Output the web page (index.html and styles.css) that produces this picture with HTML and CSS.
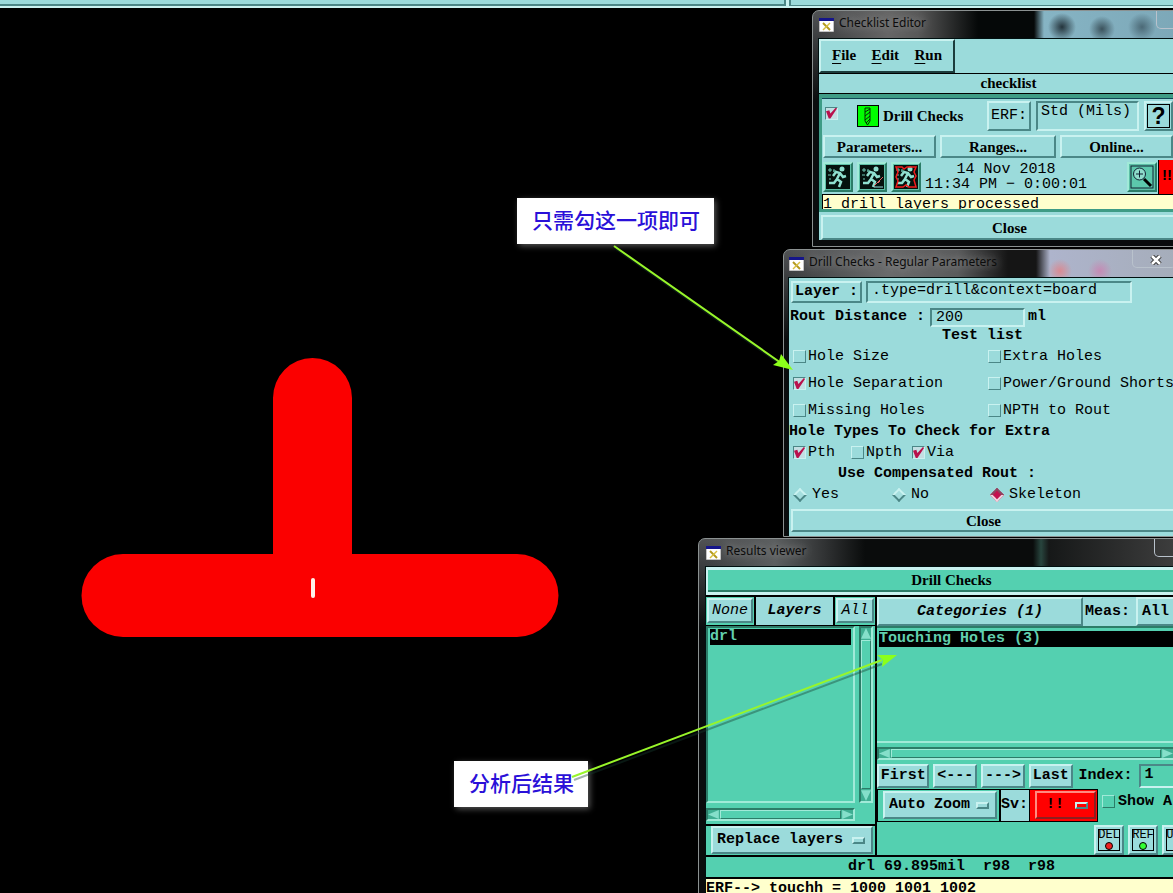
FILE: index.html
```html
<!DOCTYPE html>
<html lang="en">
<head>
<meta charset="utf-8">
<title>Drill Checks</title>
<link rel="stylesheet" href="styles.css">
</head>
<body>
<svg class="defs" aria-hidden="true">
  <symbol id="xicon" viewBox="0 0 15 14">
    <rect width="15" height="14" fill="#fff"/><rect width="15" height="3" fill="#15158a"/>
    <path d="M0 3v11h15V3" fill="none" stroke="#888"/>
    <path d="M4 5l7 7" stroke="#b49a20" stroke-width="2"/><path d="M11 5l-7 7" stroke="#d8c040" stroke-width="1.500"/>
  </symbol>
  <symbol id="runner" viewBox="0 0 24 24">
    <rect width="24" height="24" fill="#04120e"/>
    <circle cx="16" cy="4" r="2.500" fill="#8fe0d0"/>
    <path d="M14 8l-3 6 4 3-2 5M11 14l-3 4H3M7 11l3-4 4 1 3 4 3-1" fill="none" stroke="#8fe0d0" stroke-width="2.500"/>
    <path d="M4 3v4M2 5h4M8 4v3M7 6h3M2 10h3M3 14h2" stroke="#6fc8b4"/>
  </symbol>
</svg>

<div class="topbar"><div class="topbar-part"></div><div class="topbar-part topbar-end"></div></div>

<main class="desktop">
  <svg class="board" width="600" height="893" aria-label="Drill layer">
    <path d="M273 554V398a39.500 40 0 0 1 79 0V554H517a41 41 0 0 1 0 83H123a41 41 0 0 1 0-83z" fill="#fb0000"/>
    <rect x="311" y="578" width="4" height="20" rx="2" fill="#fff0e8"/>
  </svg>

  <section class="window win-checklist">
    <header class="titlebar"><svg class="xicon"><use href="#xicon"/></svg><h2>Checklist Editor</h2><span class="caption-group"></span></header>
    <div class="client">
      <nav class="menurow"><div class="menubar">
        <button type="button"><u>F</u>ile</button><button type="button"><u>E</u>dit</button><button type="button"><u>R</u>un</button>
      </div></nav>
      <div class="listname">checklist</div>
      <div class="checkpanel">
        <div class="checkhead">
          <input type="checkbox" class="tick" aria-label="Drill Checks enabled" checked>
          <svg class="drill" viewBox="0 0 22 22"><rect width="22" height="22" fill="#000"/><rect x="1" y="1" width="20" height="20" fill="#0f0"/><path d="M8 3h5v13l-2.500 4L8 16zM8 7l5-3M8 11l5-4M8 15l5-4M9 18l4-4" fill="none" stroke="#062806"/></svg>
          <strong>Drill Checks</strong>
          <button type="button" class="btn mono erf">ERF:</button>
          <input type="text" class="field erf-field" aria-label="ERF" value="Std (Mils)">
          <button type="button" class="btn help" aria-label="Help"><span>?</span></button>
        </div>
        <div class="checkbuttons">
          <button type="button" class="btn">Parameters...</button><button type="button" class="btn">Ranges...</button><button type="button" class="btn">Online...</button>
        </div>
        <div class="runrow">
          <button type="button" class="btn green icon" aria-label="Run"><svg><use href="#runner"/></svg></button>
          <button type="button" class="btn green icon" aria-label="Run on selection"><svg viewBox="0 0 24 24"><use href="#runner"/><path d="M14 21l9-9M18 18l2-2" stroke="#d66" fill="none"/><path d="M14 22h9" stroke="#9dd"/></svg></button>
          <button type="button" class="btn green icon" aria-label="Run in area"><svg viewBox="0 0 24 24"><use href="#runner"/><path d="M2 2h6l2 2 3-2h9l-2 5 2 4-2 4 2 7h-7l-3-2-3 2H2l2-6-2-4 2-5z" stroke="#f21c1c" stroke-width="1.500" fill="none"/></svg></button>
          <p class="runtime">14 Nov 2018<br>11:34 PM − 0:00:01</p>
          <button type="button" class="btn green icon" aria-label="Show results"><svg viewBox="0 0 24 24"><rect x="1" y="1" width="22" height="22" fill="#5cc8ac" stroke="#123"/><circle cx="9.500" cy="9" r="6" fill="#8edccb" stroke="#123"/><path d="M6 9h7M9.500 5.500v7" stroke="#123"/><path d="M14 14l7 7" stroke="#000" stroke-width="3"/></svg></button>
          <div class="severity">!!</div>
        </div>
        <div class="message">1 drill layers processed</div>
      </div>
      <button type="button" class="btn wide">Close</button>
    </div>
  </section>

  <section class="window win-params">
    <header class="titlebar"><svg class="xicon"><use href="#xicon"/></svg><h2>Drill Checks - Regular Parameters</h2>
      <button type="button" class="caption-group" aria-label="Close window"><svg viewBox="0 0 12 10"><path d="M2 1l8 8M10 1l-8 8" stroke="#333" stroke-width="4.500"/><path d="M2 1l8 8M10 1l-8 8" stroke="#fff" stroke-width="2.500"/></svg></button></header>
    <form class="client mono">
      <div class="layerrow"><button type="button" class="btn mono bold">Layer :</button><input type="text" class="field" aria-label="Layer" value=".type=drill&amp;context=board"></div>
      <div class="routrow"><label for="rout">Rout Distance :</label><input type="text" class="field" id="rout" value="200"><b>ml</b></div>
      <h3 class="center">Test list</h3>
      <div class="tests">
        <label><input type="checkbox" class="tick">Hole Size</label><label><input type="checkbox" class="tick">Extra Holes</label>
        <label><input type="checkbox" class="tick" checked>Hole Separation</label><label><input type="checkbox" class="tick">Power/Ground Shorts</label>
        <label><input type="checkbox" class="tick">Missing Holes</label><label><input type="checkbox" class="tick">NPTH to Rout</label>
      </div>
      <h3>Hole Types To Check for Extra</h3>
      <div class="types">
        <label><input type="checkbox" class="tick" checked>Pth</label><label><input type="checkbox" class="tick">Npth</label><label><input type="checkbox" class="tick" checked>Via</label>
      </div>
      <h3 class="rout-title">Use Compensated Rout :</h3>
      <div class="radios">
        <label><input type="radio" name="rout">Yes</label><label><input type="radio" name="rout">No</label><label><input type="radio" name="rout" checked>Skeleton</label>
      </div>
      <button type="button" class="btn wide">Close</button>
    </form>
  </section>

  <section class="window win-results">
    <header class="titlebar"><svg class="xicon"><use href="#xicon"/></svg><h2>Results viewer</h2><span class="caption-group"></span></header>
    <div class="client">
      <div class="results-name">Drill Checks</div>
      <div class="results-body">
        <div class="layers">
          <div class="layers-head"><div><button type="button" class="btn mono ital">None</button></div><strong>Layers</strong><div><button type="button" class="btn mono ital">All</button></div></div>
          <div class="layers-list">
            <div class="listbox"><div class="selected">drl</div></div>
            <div class="vscroll"><i class="up"></i><span></span><i class="down"></i></div>
            <div class="hscroll"><i class="left"></i><span></span><i class="right"></i></div>
          </div>
          <div class="replace"><div class="option"><select aria-label="Layer display"><option>Replace layers</option></select></div></div>
        </div>
        <div class="categories">
          <div class="cat-head"><button type="button" class="btn mono bold ital">Categories (1)</button><b>Meas:</b><button type="button" class="btn mono bold">All</button></div>
          <div class="listbox"><div class="selected">Touching Holes (3)</div></div>
          <div class="hscroll"><i class="left"></i><span></span><i class="right"></i></div>
          <div class="navrow"><button type="button" class="btn">First</button><button type="button" class="btn">&lt;---</button><button type="button" class="btn">---&gt;</button><button type="button" class="btn">Last</button><label for="index">Index:</label><input type="text" class="field" id="index" value="1"></div>
          <div class="zoomrow">
            <div class="zoombox"><div class="option"><select aria-label="Zoom mode"><option>Auto Zoom</option></select></div></div>
            <label for="sv">Sv:</label>
            <div class="svbox"><div class="option red"><select id="sv"><option>!!</option></select></div></div>
            <label class="showall"><input type="checkbox" class="tick">Show All</label>
          </div>
          <div class="actions"><button type="button" class="btn act">DEL</button><button type="button" class="btn act go">REF</button><button type="button" class="btn act">UPD</button></div>
        </div>
      </div>
      <div class="status">drl 69.895mil&nbsp; r98&nbsp; r98</div>
      <div class="erfline">ERF--&gt; touchh = 1000 1001 1002</div>
    </div>
  </section>

  <div class="note note-check">只需勾这一项即可</div>
  <div class="note note-result">分析后结果</div>
  <svg class="arrows" width="1173" height="893" aria-hidden="true">
    <g stroke="#163c30" stroke-opacity=".4" stroke-width="2"><path d="M616 249L783 366M574 780L882 664"/></g>
    <g stroke="#98f52a" stroke-width="2"><path d="M614 246L781 363M572 777L882 660"/></g>
    <path d="M793 370L773 365L779 361L781 354zM897 655L882 667L883 660L877 655z" fill="#8cff1a"/>
  </svg>
</main>
</body>
</html>
```
FILE: styles.css
```css
:root { --cyan: #9bdbdb; --green: #54d0b0; --lite: #c9f2f0; --dark: #4b8787; --gdark: #2c7c68; --glite: #a0ead8; }
*, ::before, ::after { box-sizing: border-box; }
body { margin: 0; height: 100vh; overflow: hidden; position: relative; background: #000; color: #000; font: bold 15px/18px "Liberation Serif", serif; }
button, input, select { font: inherit; color: inherit; margin: 0; padding: 0; border: 0; border-radius: 0; background: none; }
h2, h3, p { margin: 0; font: inherit; }
.defs { position: absolute; width: 0; height: 0; }
.mono { font-family: "Liberation Mono", monospace; font-weight: normal; }
.bold { font-weight: bold; }
.ital { font-style: italic; }

.topbar { display: flex; gap: 3px; height: 8px; background: var(--lite); }
.topbar-part { width: 67%; height: 6px; background: var(--cyan); border: solid var(--dark); border-width: 0 2px 2px 0; }
.topbar-end { flex: 1; border-width: 0 0 1px 2px; }
.board, .arrows { position: absolute; left: 0; top: 0; }
.arrows { pointer-events: none; fill: none; }

/* Window frames */
.window { position: absolute; padding: 0 5px 6px; border: 1px solid #8b9191; border-radius: 7px 7px 0 0; background: linear-gradient(#505254, #0a0c0d 90px); }
.win-checklist { left: 812px; top: 10px; width: 392px; }
.win-params { left: 783px; top: 249px; width: 398px; padding: 0 4px; }
.win-results { left: 698px; top: 538px; width: 506px; padding: 0 6px; }
.titlebar { display: flex; align-items: center; gap: 5px; height: 27px; color: #0c0c0c; font: normal 12px/18px "Noto Sans", sans-serif; }
.win-checklist .titlebar { background: radial-gradient(circle at 244px 16px, #24343c 0, transparent 14px), radial-gradient(circle at 284px 18px, #3b525c 0, transparent 13px), radial-gradient(circle at 324px 16px, #4b6976 0, transparent 14px), linear-gradient(90deg, transparent, #666 70px, #585858 100px, #050808 160px, #050808 216px, #86b4c4 226px, #7ba6b6); }
.win-params .titlebar { background: radial-gradient(circle at 272px 21px, #d98a92 0, transparent 12px), radial-gradient(circle at 312px 21px, #c58ab4 0, transparent 12px), linear-gradient(90deg, transparent, #6a6b6c 100px, #5a5b5c 170px, #151515 220px, #151515 248px, #aeb4cc 262px, #a5adba); }
.win-results .titlebar { background: linear-gradient(90deg, transparent, #5c5f60 70px, #303233 120px, #0a0c0c 160px, #0a0c0c 328px, #28453e 336px, #161818 344px, #444); }
.titlebar h2 { flex: 1; padding-bottom: 3px; text-shadow: 0 0 8px #aaa; }
.titlebar .xicon { margin-left: 1px; }
.xicon { width: 15px; height: 14px; }
.caption-group { align-self: flex-start; width: 44px; height: 18px; border: 1px solid #b9c2cc; border-top: 0; border-radius: 0 0 5px 5px; }
.caption-group svg { display: block; width: 12px; height: 10px; margin: 3px auto 0 17px; }
.win-checklist .caption-group { width: 42px; }
.win-results .caption-group { width: 43px; }
.client { border: solid #001010; border-width: 1px 0 0 1px; background: var(--cyan); }

/* Controls */
.btn { border: 2px solid; border-color: var(--lite) var(--dark) var(--dark) var(--lite); background: var(--cyan); white-space: nowrap; height: 23px; line-height: 18px; }
.green { background: #5cbfa6; border-color: var(--glite) var(--gdark) var(--gdark) var(--glite); }
.wide { display: block; width: calc(100% - 2px); margin-left: 2px; }
.field { min-width: 0; height: 22px; border: 2px solid; border-color: var(--dark) var(--lite) var(--lite) var(--dark); padding-left: 4px; font: 15px/16px "Liberation Mono", monospace; }
.tick { appearance: none; flex: none; width: 13px; height: 13px; border: 1px solid; border-color: var(--lite) var(--dark) var(--dark) var(--lite); }
.tick:checked { border-color: var(--dark) var(--lite) var(--lite) var(--dark); background: #c3dfe3; }
.tick:checked::before { content: ""; display: block; width: 11px; height: 11px; background: #b8114c; clip-path: polygon(0 35%, 30% 25%, 40% 55%, 90% 0, 100% 10%, 40% 100%, 25% 100%); }
.listbox { border: 2px solid; border-color: var(--gdark) var(--glite) var(--glite) var(--gdark); background: var(--green); padding: 1px 2px 0 2px; font: bold 15px/16px "Liberation Mono", monospace; }
.selected { background: #000; color: #62cfae; }
.hscroll, .vscroll { display: flex; border: 2px solid; border-color: var(--gdark) var(--glite) var(--glite) var(--gdark); background: #3fae92; }
.hscroll { height: 13px; }
.vscroll { flex-direction: column; }
.hscroll span, .vscroll span { flex: 1; background: var(--green); border: 1px solid; border-color: var(--glite) var(--gdark) var(--gdark) var(--glite); }
.hscroll i, .vscroll i { flex: none; background: #85dfca; border: 0; }
.hscroll i { width: 12px; }
.vscroll i { height: 12px; }
.left { clip-path: polygon(0 50%, 90% 0, 90% 100%); }
.right { clip-path: polygon(100% 50%, 10% 0, 10% 100%); }
.up { clip-path: polygon(50% 0, 100% 90%, 0 90%); }
.down { clip-path: polygon(50% 100%, 100% 10%, 0 10%); }
.option { position: relative; height: 28px; border: 2px solid; border-color: var(--lite) var(--dark) var(--dark) var(--lite); background: var(--cyan); font: bold 15px/22px "Liberation Mono", monospace; }
.option select { appearance: none; width: 100%; height: 100%; padding: 0 4px; }
.option::after { content: ""; position: absolute; right: 6px; top: 9px; width: 13px; height: 7px; border: 2px solid; border-color: var(--lite) var(--dark) var(--dark) var(--lite); }
.red { background: #f00; border-color: #ff8a80 #8c2020 #8c2020 #ff8a80; }

/* Checklist editor */
.menurow { height: 35px; border-bottom: 1px solid #000; }
.menubar { display: flex; justify-content: space-between; align-items: center; width: 136px; height: 34px; padding: 0 11px 2px; border: 2px solid; border-color: var(--lite) #1c3c3c #1c3c3c var(--lite); }
.menubar u { text-underline-offset: 3px; }
.listname { height: 20px; border-bottom: 1px solid #000; text-align: center; line-height: 19px; }
.checkpanel { border: solid #3e9c86; border-width: 4px 0 3px 3px; }
.checkhead { display: flex; align-items: center; height: 35px; padding-left: 3px; border-top: 1px solid #145; }
.checkhead .tick { margin: 0 19px 6px 0; }
.drill { width: 22px; height: 22px; margin-right: 4px; }
.checkhead strong { width: 104px; }
.erf { width: 44px; height: 30px; }
.erf-field { width: 103px; height: 30px; margin: 0 5px; padding-bottom: 10px; padding-left: 3px; }
.help { width: 29px; height: 30px; padding: 1px; }
.help span { display: block; border: 1px solid #000; font: bold 23px/22px "Liberation Sans", sans-serif; }
.checkbuttons { display: grid; grid-template-columns: 113px 116px 113px; gap: 4px; margin: 2px 0 2px 1px; }
.runrow { display: flex; align-items: center; gap: 4px; height: 34px; padding-left: 1px; }
.icon { flex: none; width: 30px; height: 30px; padding: 1px; }
.icon svg { display: block; width: 24px; height: 24px; }
.runtime { width: 198px; padding-right: 36px; text-align: center; font: 15px/15px "Liberation Mono", monospace; white-space: nowrap; }
.severity { flex: 1; height: 34px; margin-left: -3px; background: #f00; border-left: 1px solid #000; line-height: 30px; padding-left: 3px; font-family: "Liberation Sans", sans-serif; }
.message { height: 15px; overflow: hidden; border: solid #000; border-width: 1px 0 0 1px; background: #ffffcd; font: 15px/20px "Liberation Mono", monospace; }
.win-checklist .wide { margin-top: 3px; height: 25px; }

/* Regular parameters */
.win-params .client { padding-bottom: 4px; }
.layerrow { display: flex; gap: 4px; padding: 3px 0 0 2px; }
.layerrow .btn { width: 71px; height: 22px; }
.layerrow .field { width: 266px; padding-bottom: 4px; }
.routrow { display: flex; align-items: center; gap: 3px; height: 25px; padding: 3px 0 0 1px; font-weight: bold; }
.routrow label { width: 137px; }
.routrow .field { width: 95px; height: 19px; }
.win-params h3 { height: 15px; line-height: 15px; font-weight: bold; }
.center { text-align: center; }
.tests { display: grid; grid-template-columns: 195px 1fr; grid-auto-rows: 27px; white-space: nowrap; }
.win-params label { display: flex; align-items: center; gap: 2px; }
.tests, .types { padding-left: 4px; }
.types { display: flex; height: 27px; gap: 16px; }
.types label:nth-child(2) { margin-right: -6px; }
.win-params .rout-title { padding-left: 49px; }
.radios { display: grid; grid-template-columns: 99px 98px 1fr; height: 28px; padding-left: 6px; }
.win-params .radios label { gap: 7px; }
.radios input { appearance: none; width: 10px; height: 10px; transform: rotate(45deg); border: 2px solid; border-color: var(--lite) var(--dark) var(--dark) var(--lite); background: #a5dede; }
.radios input:checked { background: #c4104e; border-color: #8d4760 #f0d4de #f0d4de #8d4760; }
.win-params .wide { font-family: "Liberation Serif", serif; font-weight: bold; }

/* Results viewer */
.win-results .client { background: #000; font-family: "Liberation Mono", monospace; }
.results-name { height: 28px; border: 2px solid var(--lite); border-width: 3px 2px; background: var(--green); box-shadow: inset -2px -2px var(--gdark); text-align: center; line-height: 21px; font-family: "Liberation Serif", serif; margin-bottom: 2px; }
.results-body { display: grid; grid-template-columns: 169px 1fr; gap: 2px; }
.layers { display: flex; flex-direction: column; gap: 2px; }
.layers-head { display: grid; grid-template-columns: 48px 1fr 40px; gap: 2px; height: 27px; text-align: center; }
.layers-head div { background: var(--green); padding: 1px; }
.layers-head .btn { width: 100%; height: 25px; }
.layers-head strong { background: var(--cyan); font-style: italic; line-height: 28px; }
.layers-list { display: grid; grid-template-columns: 149px 14px; grid-template-rows: 177px 13px; gap: 5px 4px; background: var(--green); flex: 1; }
.replace { background: var(--green); padding: 0 2px 1px 5px; }
.categories { background: var(--green); min-width: 0; }
.cat-head { display: grid; grid-template-columns: 206px 49px 60px; gap: 2px; height: 31px; background: var(--cyan); line-height: 29px; border-bottom: 2px solid var(--gdark); }
.cat-head .btn { height: 29px; padding: 0 8px; text-align: center; }
.cat-head .btn:last-child { padding: 0 4px; text-align: left; }
.categories .listbox { height: 115px; padding-top: 3px; border-top: 0; border-left: 0; }
.categories .hscroll { margin: 4px 0; width: 298px; }
.navrow { display: flex; gap: 4px; height: 25px; }
.navrow .btn { width: 45px; height: 24px; }
.navrow .btn:first-child { width: 54px; }
.navrow label { margin: 3px 3px 0 2px; width: 53px; }
.navrow .field { width: 60px; font-weight: bold; height: 24px; padding-bottom: 4px; }
.zoomrow { display: flex; height: 33px; }
.zoombox { width: 124px; border: 1px solid #000; border-right-width: 2px; padding: 1px 2px 0 5px; }
.zoomrow > label:not(.showall) { width: 28px; background: var(--cyan); border: solid #000; border-width: 1px 0; line-height: 30px; }
.svbox { width: 69px; background: #f00; border: 1px solid #000; padding: 1px 1px 0 5px; }
.svbox select { padding-left: 9px; }
.showall { display: flex; gap: 3px; height: 25px; align-items: center; padding-left: 4px; white-space: nowrap; }
.showall .tick { border-color: var(--glite) var(--gdark) var(--gdark) var(--glite); }
.actions { display: flex; gap: 4px; padding: 3px 0 0 217px; }
.act { width: 30px; height: 30px; padding: 1px 0; font: 12px/11px "Liberation Mono", monospace; outline: 1px solid #000; outline-offset: -5px; }
.act::after { content: ""; display: block; width: 8px; height: 8px; margin: 1px auto; border: 1px solid #000; border-radius: 50%; background: #e22; }
.go::after { background: #3f3; }
.status { height: 20px; margin: 2px 0; background: var(--green); text-align: center; line-height: 19px; }
.erfline { height: 24px; background: #ffffcd; line-height: 20px; }

/* Annotations */
.note { position: absolute; padding: 8px 14px 12px 15px; background: #fff; color: #2a10d8; font: 500 21px/26px "Noto Sans CJK SC", sans-serif; box-shadow: 2px 2px 6px #555; white-space: nowrap; }
.note-check { left: 517px; top: 198px; }
.note-result { left: 454px; top: 761px; }
```
